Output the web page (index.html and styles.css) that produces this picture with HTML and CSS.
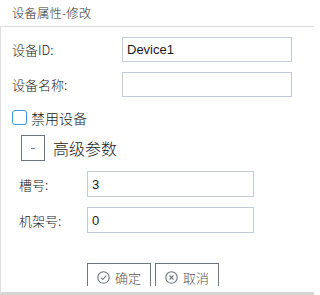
FILE: index.html
```html
<!DOCTYPE html>
<html>
<head>
<meta charset="utf-8">
<link rel="stylesheet" href="styles.css">
</head>
<body>
<div class="dialog">
  <div class="title">设备属性-修改</div>
  <div class="body">
    <div class="row main">
      <span class="lbl">设备ID:</span>
      <div class="input wide">Device1</div>
    </div>
    <div class="row main">
      <span class="lbl">设备名称:</span>
      <div class="input wide"></div>
    </div>
    <div class="check">
      <span class="box"></span>
      <span class="check-text">禁用设备</span>
    </div>
    <div class="adv">
      <span class="toggle"><span class="dash"></span></span>
      <span class="adv-title">高级参数</span>
    </div>
    <div class="row sub">
      <span class="lbl sub-lbl">槽号:</span>
      <div class="input narrow">3</div>
    </div>
    <div class="row sub">
      <span class="lbl sub-lbl">机架号:</span>
      <div class="input narrow">0</div>
    </div>
    <div class="actions">
      <div class="btn">
        <svg class="ico" width="13" height="13" viewBox="0 0 13 13"><circle cx="6.5" cy="6.5" r="5.7" fill="none" stroke="#6e7680" stroke-width="1.1"/><path d="M3.9 6.7 L5.8 8.5 L9.2 4.6" fill="none" stroke="#6e7680" stroke-width="1.1"/></svg>
        <span>确定</span>
      </div>
      <div class="btn">
        <svg class="ico" width="13" height="13" viewBox="0 0 13 13"><circle cx="6.5" cy="6.5" r="5.7" fill="none" stroke="#6e7680" stroke-width="1.1"/><path d="M4.5 4.5 L8.5 8.5 M8.5 4.5 L4.5 8.5" fill="none" stroke="#6e7680" stroke-width="1.1"/></svg>
        <span>取消</span>
      </div>
    </div>
  </div>
</div>
</body>
</html>
```
FILE: styles.css
```css
html, body {
  margin: 0;
  padding: 0;
  background: #ffffff;
}
body {
  font-family: "Noto Sans CJK SC", "Noto Sans", sans-serif;
  font-weight: 300;
  color: #333333;
  width: 314px;
  height: 295px;
  overflow: hidden;
}
.dialog {
  width: 314px;
  height: 295px;
  display: flex;
  flex-direction: column;
}
.title {
  height: 26px;
  line-height: 26px;
  padding-left: 12px;
  font-size: 12.5px;
  color: #333;
  border-bottom: 1px solid #dcdcdc;
  flex: none;
}
.body {
  flex: none;
  height: 265px;
  border-left: 1px solid #dedede;
  border-bottom: 3px solid #d6d6d6;
  display: flex;
  flex-direction: column;
  overflow: hidden;
}
.row {
  display: flex;
  align-items: center;
}
.main {
  padding-left: 11px;
  margin-top: 10px;
}
.main .lbl {
  width: 110px;
}
.lbl {
  font-size: 13px;
  color: #222;
}
.input {
  box-sizing: border-box;
  border: 1px solid #c3cad5;
  font-family: "Liberation Sans", Arial, sans-serif;
  font-weight: 400;
  font-size: 13px;
  color: #1a1a1a;
  padding-left: 4px;
  display: flex;
  align-items: center;
}
.wide {
  width: 170px;
  height: 25px;
}
.narrow {
  width: 167px;
  height: 26px;
}
.check {
  margin-top: 13px;
  margin-left: 11px;
  display: flex;
  align-items: center;
  height: 15px;
}
.box {
  box-sizing: border-box;
  width: 15px;
  height: 15px;
  border: 1.5px solid #3a96dd;
  border-radius: 3px;
  margin-right: 4px;
}
.check-text {
  font-size: 14px;
  color: #222;
}
.adv {
  margin-top: 10px;
  margin-left: 20px;
  display: flex;
  align-items: center;
}
.toggle {
  box-sizing: border-box;
  width: 24px;
  height: 26px;
  border: 1px solid #6e7680;
  display: flex;
  align-items: center;
  justify-content: center;
  margin-right: 8px;
}
.dash {
  width: 4px;
  height: 1px;
  background: #6a7f99;
}
.adv-title {
  font-size: 16px;
  color: #222;
}
.sub {
  padding-left: 18px;
  margin-top: 10px;
}
.sub-lbl {
  width: 68px;
}
.actions {
  margin-top: 30px;
  margin-left: 86px;
  height: 23px;
  overflow: hidden;
  display: flex;
  gap: 4px;
  flex: none;
}
.btn {
  box-sizing: border-box;
  width: 64px;
  height: 28px;
  border: 1px solid #6e7680;
  display: flex;
  align-items: center;
  justify-content: center;
  gap: 5px;
  font-size: 13px;
  color: #555;
}
.ico {
  flex: none;
}
```
